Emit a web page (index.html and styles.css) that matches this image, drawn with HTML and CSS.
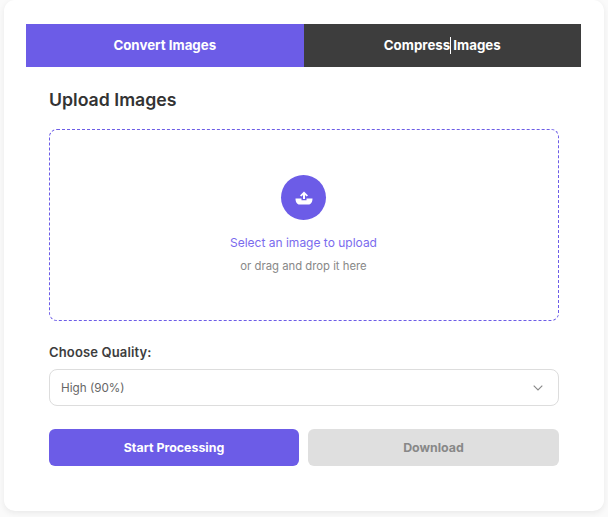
FILE: index.html
```html
<!DOCTYPE html>
<html lang="en">
<head>
    <meta charset="UTF-8">
    <title>Image Tools</title>
    <link rel="stylesheet" href="styles.css">
</head>
<body>
<div class="card">
    <div class="tabs">
        <div class="tab active">Convert Images</div>
        <div class="tab">Compress<span class="caret"></span> Images</div>
    </div>
    <div class="content">
        <h2 class="title">Upload Images</h2>
        <div class="drop">
            <div class="circle">
                <svg width="18" height="14" viewBox="0 0 18 14">
                    <path d="M9 0.5 L13 4.5 L11.6 5.4 L10 3.9 L10 8 L8 8 L8 3.9 L6.4 5.4 L5 4.5 Z" fill="#fff"/>
                    <path d="M0.5 7.5 L6.5 7.5 L6.5 9.2 L11.5 9.2 L11.5 7.5 L17.5 7.5 C17.5 11 16 13.5 13.5 13.5 L4.5 13.5 C2 13.5 0.5 11 0.5 7.5 Z" fill="#fff"/>
                </svg>
            </div>
            <div class="select-text">Select an image to upload</div>
            <div class="hint">or drag and drop it here</div>
        </div>
        <div class="label">Choose Quality:</div>
        <div class="select">
            <span>High (90%)</span>
            <svg width="10" height="6" viewBox="0 0 10 6"><path d="M0.7 0.7 L5 5 L9.3 0.7" fill="none" stroke="#888" stroke-width="1.1"/></svg>
        </div>
        <div class="buttons">
            <div class="btn start">Start Processing</div>
            <div class="btn download">Download</div>
        </div>
    </div>
</div>
</body>
</html>
```

FILE: styles.css
```css
*{box-sizing:border-box;}
html,body{margin:0;padding:0;}
body{width:608px;height:517px;background:#fafafa;font-family:Inter,"Liberation Sans",sans-serif;overflow:hidden;}
.card{width:600px;height:511px;margin-left:4px;padding-top:24px;background:#fff;border-radius:11px;box-shadow:0 2px 6px rgba(0,0,0,0.07);}
.tabs{display:flex;width:555px;height:43px;margin-left:22px;}
.tab{flex:1;display:flex;align-items:center;justify-content:center;padding-bottom:1px;background:#3d3d3d;color:#fff;font-size:13.3px;font-weight:700;white-space:pre;}
.tab.active{background:#6c5ce7;}
.caret{display:inline-block;width:1px;height:17px;margin-right:-1px;background:#fff;}
.content{width:510px;margin-left:45px;}
.title{margin:0;height:62px;padding-top:20px;font-size:17.7px;line-height:26px;font-weight:600;color:#333;}
.drop{display:flex;flex-direction:column;align-items:center;height:192px;padding:45px 1px 0 0;border:1px dashed #6c5ce7;border-radius:8px;}
.circle{display:flex;align-items:center;justify-content:center;width:45px;height:45px;border-radius:50%;background:#6c5ce7;}
.select-text{margin-top:14px;font-size:12px;line-height:18px;color:#7a6bee;}
.hint{margin-top:6px;font-size:11.3px;line-height:16px;color:#888;}
.label{margin-top:22px;height:26px;font-size:13px;line-height:18px;font-weight:600;letter-spacing:.15px;color:#3d3d3d;}
.select{display:flex;align-items:center;justify-content:space-between;height:37px;padding:0 15px 0 11px;border:1px solid #ddd;border-radius:8px;font-size:11.7px;color:#666;}
.buttons{display:flex;gap:9px;margin-top:23px;}
.btn{display:flex;align-items:center;justify-content:center;height:37px;padding-bottom:1px;border-radius:6px;font-size:12.4px;font-weight:700;}
.start{width:250px;background:#6c5ce7;color:#fff;}
.download{width:251px;background:#dfdfdf;color:#888;}
```
